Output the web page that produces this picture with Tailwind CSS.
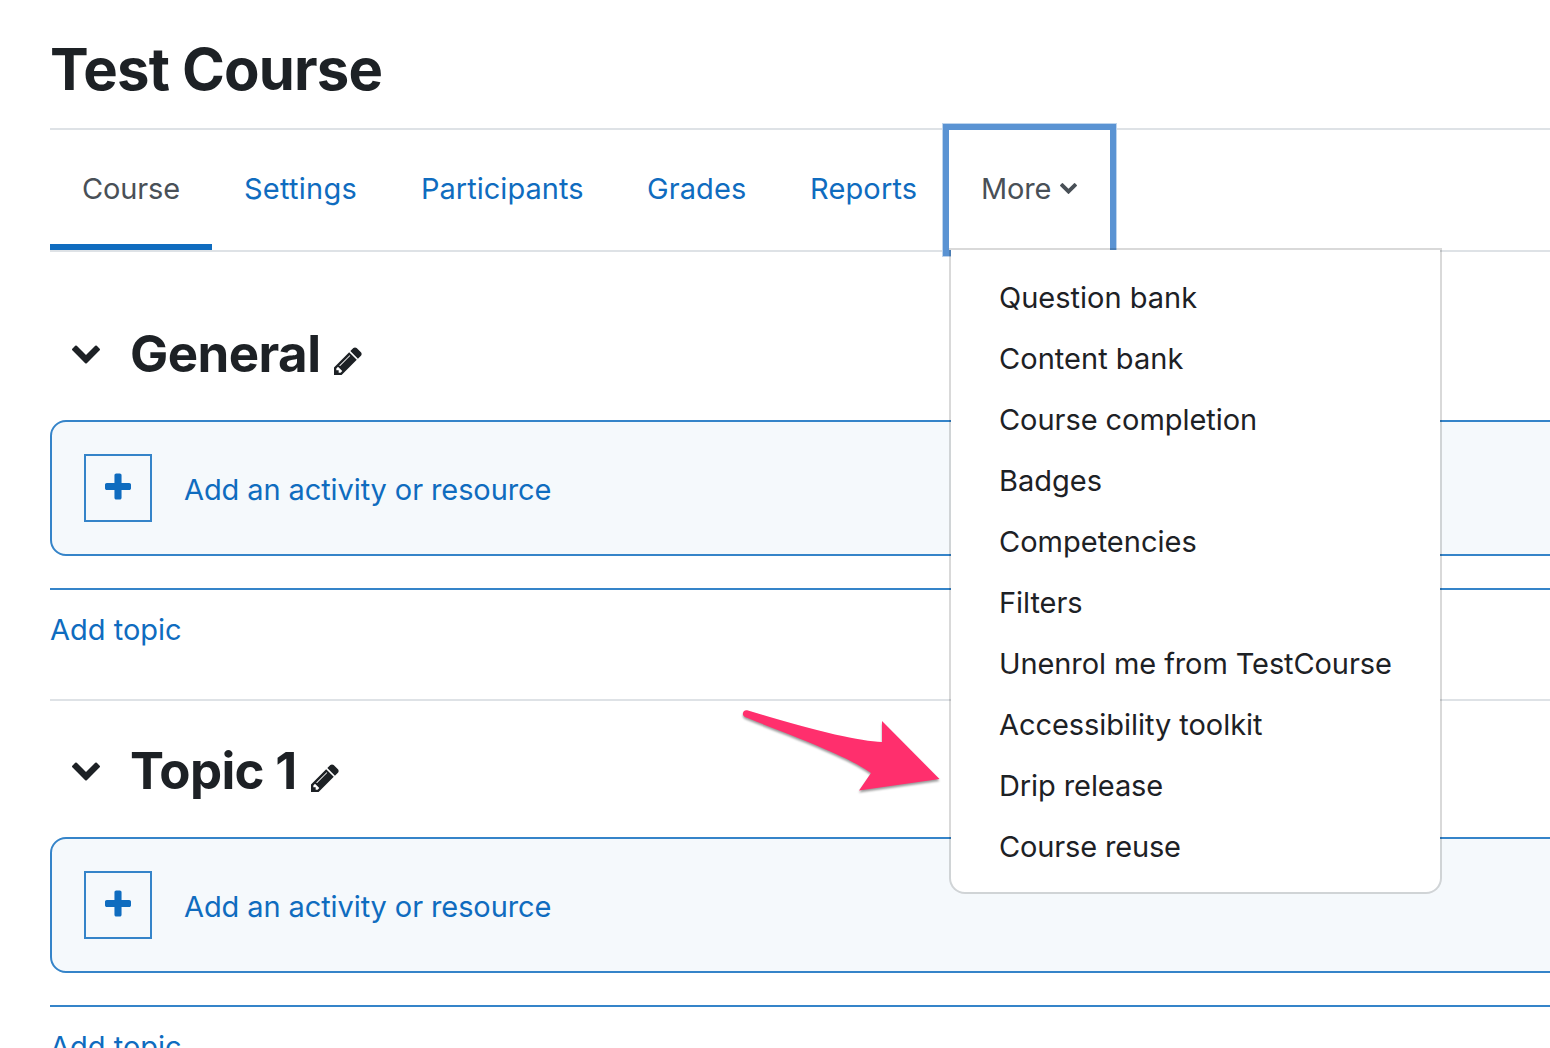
<!DOCTYPE html>
<html lang="en"><head><meta charset="utf-8"><title>Test Course</title>
<script src="https://cdn.jsdelivr.net/npm/@tailwindcss/browser@4"></script></head>
<body class="w-[1550px] h-[1048px] overflow-hidden bg-white font-['Inter',sans-serif] text-[29px] leading-[45px] tracking-[-0.1px] text-[#1d2125]">
<svg class="hidden">
<symbol id="pencil" viewBox="128 128 1536 1536"><path d="M491 1536l91-91-235-235-91 91v107h128v128h107zm523-928q0-22-22-22-10 0-17 7l-542 542q-7 7-7 17 0 22 22 22 10 0 17-7l542-542q7-7 7-17zm-54-192l416 416-832 832h-416v-416zm683 96q0 53-37 90l-166 166-416-416 166-165q36-38 90-38 53 0 91 38l235 234q37 39 37 91z"/></symbol>
<symbol id="chevron" viewBox="90 533 1612 1035"><path d="M1683 808l-742 741q-19 19-45 19t-45-19l-742-741q-19-19-19-45.500t19-45.500l166-165q19-19 45-19t45 19l531 531 531-531q19-19 45-19t45 19l166 165q19 19 19 45.500t-19 45.500z"/></symbol>
<symbol id="plus" viewBox="192 128 1408 1408"><path d="M1600 736v192q0 40-28 68t-68 28h-416v416q0 40-28 68t-68 28h-192q-40 0-68-28t-28-68v-416h-416q-40 0-68-28t-28-68v-192q0-40 28-68t68-28h416v-416q0-40 28-68t68-28h192q40 0 68 28t28 68v416h416q40 0 68 28t28 68z"/></symbol>
</svg>
<div class="relative ml-[50px] w-[1500px] h-[1048px] overflow-hidden whitespace-nowrap">
  <h1 class="h-[128px] pt-[33px] text-[58px] leading-[72px] font-bold tracking-[-0.85px]">Test Course</h1>
  <nav class="flex h-[124px] border-y-2 border-[#dee2e6] text-[#0f6cbf]">
    <a class="w-[162px] pl-8 pt-9 h-[120px] border-b-6 border-[#0f6cbf] text-[#495057] tracking-[-0.15px]">Course</a>
    <a class="w-[177px] pl-8 pt-9 tracking-[0.24px]">Settings</a>
    <a class="w-[226px] pl-8 pt-9 tracking-[0.02px]">Participants</a>
    <a class="w-[163px] pl-8 pt-9 tracking-[0.08px]">Grades</a>
    <a class="w-[171px] pl-8 pt-9 tracking-[0.15px]">Reports</a>
    <div class="relative w-[161px] h-[120px]">
      <a class="flex h-full pl-8 pt-9 text-[#495057] bg-white outline-6 outline-[#5a93d3] shadow-[0_0_0_7px_#bdd4ed] tracking-[-0.15px]">More<svg class="ml-[9px] mt-[17px] w-[17px] h-[11px] fill-current"><use href="#chevron"/></svg></a>
      <div class="absolute z-10 left-0 top-[118px] w-[493px] h-[646px] border-2 border-black/15 bg-white bg-clip-padding rounded-b-2xl pt-[17px] pl-12 text-[#1d2125] leading-[61px]">
        <div class="tracking-[0px]">Question bank</div>
        <div class="tracking-[0.03px]">Content bank</div>
        <div class="tracking-[-0.06px]">Course completion</div>
        <div class="tracking-[0px]">Badges</div>
        <div class="tracking-[0px]">Competencies</div>
        <div class="tracking-[-0.05px]">Filters</div>
        <div class="tracking-[-0.1px]">Unenrol me from TestCourse</div>
        <div class="tracking-[-0.05px]">Accessibility toolkit</div>
        <div class="tracking-[-0.1px]">Drip release</div>
        <div class="tracking-[-0.16px]">Course reuse</div>
      </div>
    </div>
  </nav>
  <section class="h-[449px] pt-[72px] border-b-2 border-[#dee2e6]">
    <div class="flex h-[96px] pl-[22px] fill-[#1d2125]"><svg class="mt-[21px] w-[28px] h-[19px]"><use href="#chevron"/></svg><h2 class="ml-[30px] w-[204px] text-[51px] leading-[60px] font-bold tracking-[-0.55px]">General</h2><svg class="mt-[23px] w-[28px] h-[28px]"><use href="#pencil"/></svg></div>
    <div class="flex items-center w-[1560px] h-[136px] pl-8 border-2 border-[#3584c9] rounded-2xl bg-[#f5f9fc] text-[#0f6cbf]"><div class="flex justify-center pt-[17px] w-[68px] h-[68px] border-2 border-[#3584c9]"><svg class="w-[26px] h-[27px] fill-current"><use href="#plus"/></svg></div><a class="ml-8 pt-[3px]">Add an activity or resource</a></div>
    <div class="mt-8 pt-[17px] border-t-2 border-[#3584c9] text-[#0f6cbf] tracking-[0px]">Add topic</div>
  </section>
  <section class="pt-[40px]">
    <div class="flex h-[96px] pl-[22px] fill-[#1d2125]"><svg class="mt-[21px] w-[28px] h-[19px]"><use href="#chevron"/></svg><h2 class="ml-[30px] w-[181px] text-[51px] leading-[60px] font-bold tracking-[-0.7px]">Topic 1</h2><svg class="mt-[23px] w-[28px] h-[28px]"><use href="#pencil"/></svg></div>
    <div class="flex items-center w-[1560px] h-[136px] pl-8 border-2 border-[#3584c9] rounded-2xl bg-[#f5f9fc] text-[#0f6cbf]"><div class="flex justify-center pt-[17px] w-[68px] h-[68px] border-2 border-[#3584c9]"><svg class="w-[26px] h-[27px] fill-current"><use href="#plus"/></svg></div><a class="ml-8 pt-[3px]">Add an activity or resource</a></div>
    <div class="mt-8 pt-[17px] border-t-2 border-[#3584c9] text-[#0f6cbf] tracking-[0px]">Add topic</div>
  </section>
  <svg class="absolute z-20 left-[680px] top-[700px] w-[220px] h-[100px] drop-shadow-[0_2px_1px_rgba(0,0,0,.4)]" viewBox="730 700 220 100"><path fill="#ff2f6d" d="M748 710.500Q848 741 882 742V721L939.500 779L859 790.500L871 773C847 756 808 742 745 717C741 715 743 709 748 710.500Z"/></svg>
</div>
</body></html>
